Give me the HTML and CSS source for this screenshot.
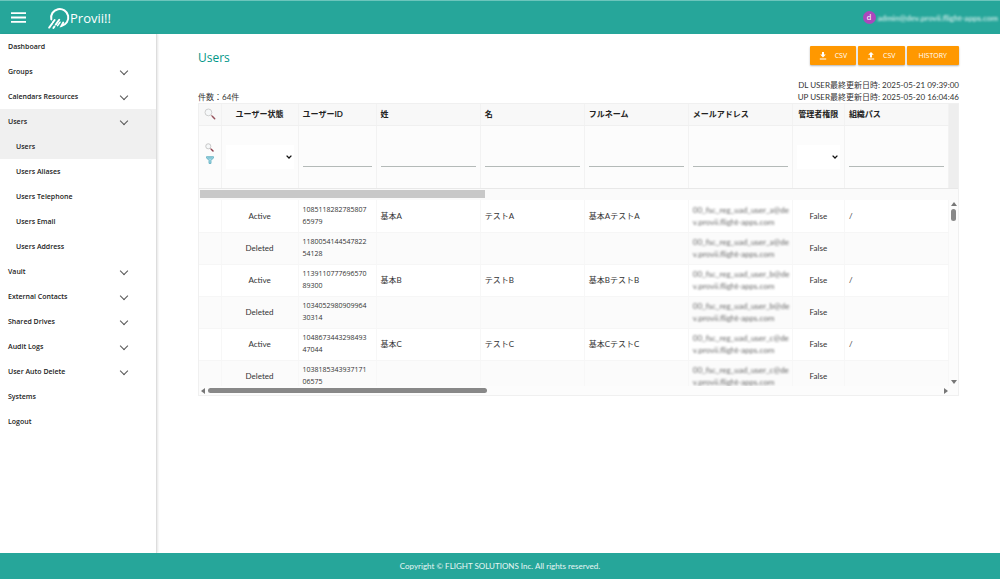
FILE: index.html
```
<!DOCTYPE html>
<html lang="ja">
<head>
    <meta charset="UTF-8">
    <meta name="viewport" content="width=device-width, initial-scale=1.0">
    <title>Provii!! - Users</title>
    <link rel="stylesheet" href="styles.css">
</head>
<body>
    <header class="topbar">
        <button type="button" class="menu-btn" aria-label="Menu">
            <svg width="15" height="11" viewBox="0 0 15 11"><path d="M0 1.2h15M0 5.5h15M0 9.8h15" stroke="#fff" stroke-width="1.8"/></svg>
        </button>
        <a href="#" class="logo">
            <svg width="22" height="22" viewBox="0 0 22 22" fill="none" stroke="#fff" stroke-linecap="round">
                <path d="M3.300 12.400A8.600 8.600 0 1 1 13.400 19L15.200 15.600" stroke-width="2"/>
                <path d="M1.200 20.600L3.600 17.200M5 15.200L6.600 13M5.400 21L6.400 19.600M7.800 17.600L11.200 12.800" stroke-width="1.900"/>
                <path d="M3.600 17.200L5 15.200M9.600 18.600L12 15.200" stroke-width="1.500"/>
            </svg>
            <span>Provii!!</span>
        </a>
        <div class="account">
            <span class="avatar">d</span>
            <span class="account-mail">admin@dev.provii.flight-apps.com</span>
        </div>
    </header>

    <div class="layout">
        <nav class="sidebar">
            <a href="#">Dashboard</a>
            <a href="#" class="has-sub">Groups</a>
            <a href="#" class="has-sub">Calendars Resources</a>
            <a href="#" class="has-sub active">Users</a>
            <div class="submenu">
                <a href="#" class="active">Users</a>
                <a href="#">Users Aliases</a>
                <a href="#">Users Telephone</a>
                <a href="#">Users Email</a>
                <a href="#">Users Address</a>
            </div>
            <a href="#" class="has-sub">Vault</a>
            <a href="#" class="has-sub">External Contacts</a>
            <a href="#" class="has-sub">Shared Drives</a>
            <a href="#" class="has-sub">Audit Logs</a>
            <a href="#" class="has-sub">User Auto Delete</a>
            <a href="#">Systems</a>
            <a href="#">Logout</a>
        </nav>

        <main>
            <div class="page-head">
                <h1>Users</h1>
                <div class="actions">
                    <button type="button" class="btn btn-icon">
                        <svg width="8" height="8" viewBox="0 0 8 8" fill="#fff"><path d="M3 0h2v2.6h1.8L4 5.4 1.2 2.6H3zM.8 6.4h6.4v1.2H.8z"/></svg>
                        CSV
                    </button>
                    <button type="button" class="btn btn-icon">
                        <svg width="8" height="8" viewBox="0 0 8 8" fill="#fff"><path d="M3 5.4h2V2.8h1.8L4 0 1.2 2.8H3zM.8 6.4h6.4v1.2H.8z"/></svg>
                        CSV
                    </button>
                    <button type="button" class="btn">HISTORY</button>
                </div>
            </div>
            <div class="page-info">
                <p class="count">件数：64件</p>
                <div class="updated">
                    <p>DL USER最終更新日時: 2025-05-21 09:39:00</p>
                    <p>UP USER最終更新日時: 2025-05-20 16:04:46</p>
                </div>
            </div>

            <div class="grid">
                <div class="grid-head">
                    <table>
                        <colgroup>
                            <col class="c-tool"><col class="c-status"><col class="c-id"><col class="c-name"><col class="c-name"><col class="c-name"><col class="c-name"><col class="c-admin"><col class="c-name">
                        </colgroup>
                        <thead>
                            <tr>
                                <th class="center"><svg class="lens" width="12" height="12" viewBox="0 0 12 12"><circle cx="4.4" cy="4.4" r="3.4" fill="#f6f8f9" stroke="#c4c4c4" stroke-width=".8"/><path d="M7 7l1.4 1.4" stroke="#c4a0a0" stroke-width="1"/><path d="M8.3 8.3l2.4 2.4" stroke="#94505a" stroke-width="1.5" stroke-linecap="round"/></svg></th>
                                <th class="center">ユーザー状態</th>
                                <th>ユーザーID</th>
                                <th>姓</th>
                                <th>名</th>
                                <th>フルネーム</th>
                                <th>メールアドレス</th>
                                <th class="center">管理者権限</th>
                                <th>組織パス</th>
                            </tr>
                            <tr class="filters">
                                <td class="tools">
                                    <button type="button" aria-label="検索"><svg width="9" height="9" viewBox="0 0 12 12"><circle cx="4.4" cy="4.4" r="3.4" fill="#f6f8f9" stroke="#b8b8b8"/><path d="M7 7l1.4 1.4" stroke="#c4a0a0" stroke-width="1.2"/><path d="M8.3 8.3l2.4 2.4" stroke="#8e3f4c" stroke-width="1.9" stroke-linecap="round"/></svg></button>
                                    <button type="button" aria-label="フィルター"><svg width="8" height="8" viewBox="0 0 8 8"><path d="M.5.7h7v1.2L5 4.4v3H3v-3L.5 1.9z" fill="#a5dbe8" stroke="#58a9bd" stroke-width=".8"/><path d="M1.5 2h5" stroke="#58a9bd" stroke-width=".6"/></svg></button>
                                </td>
                                <td><select aria-label="ユーザー状態"><option></option><option>Active</option><option>Deleted</option></select></td>
                                <td><input type="text" aria-label="ユーザーID"></td>
                                <td><input type="text" aria-label="姓"></td>
                                <td><input type="text" aria-label="名"></td>
                                <td><input type="text" aria-label="フルネーム"></td>
                                <td><input type="text" aria-label="メールアドレス"></td>
                                <td><select aria-label="管理者権限"><option></option><option>True</option><option>False</option></select></td>
                                <td><input type="text" aria-label="組織パス"></td>
                            </tr>
                        </thead>
                    </table>
                </div>
                <div class="top-scroll"><div class="top-thumb"></div></div>
                <div class="grid-body">
                    <div class="rows">
                        <table>
                            <colgroup>
                                <col class="c-tool"><col class="c-status"><col class="c-id"><col class="c-name"><col class="c-name"><col class="c-name"><col class="c-name"><col class="c-admin"><col class="c-name">
                            </colgroup>
                            <tbody>
                                <tr><td></td><td class="center">Active</td><td class="num">1085118282785807<br>65979</td><td>基本A</td><td>テストA</td><td>基本AテストA</td><td><span class="masked">00_fsc_reg_uad_user_a@de<br>v.provii.flight-apps.com</span></td><td class="center">False</td><td>/</td></tr>
                                <tr><td></td><td class="center">Deleted</td><td class="num">1180054144547822<br>54128</td><td></td><td></td><td></td><td><span class="masked">00_fsc_reg_uad_user_a@de<br>v.provii.flight-apps.com</span></td><td class="center">False</td><td></td></tr>
                                <tr><td></td><td class="center">Active</td><td class="num">1139110777696570<br>89300</td><td>基本B</td><td>テストB</td><td>基本BテストB</td><td><span class="masked">00_fsc_reg_uad_user_b@de<br>v.provii.flight-apps.com</span></td><td class="center">False</td><td>/</td></tr>
                                <tr><td></td><td class="center">Deleted</td><td class="num">1034052980909964<br>30314</td><td></td><td></td><td></td><td><span class="masked">00_fsc_reg_uad_user_b@de<br>v.provii.flight-apps.com</span></td><td class="center">False</td><td></td></tr>
                                <tr><td></td><td class="center">Active</td><td class="num">1048673443298493<br>47044</td><td>基本C</td><td>テストC</td><td>基本CテストC</td><td><span class="masked">00_fsc_reg_uad_user_c@de<br>v.provii.flight-apps.com</span></td><td class="center">False</td><td>/</td></tr>
                                <tr><td></td><td class="center">Deleted</td><td class="num">1038185343937171<br>06575</td><td></td><td></td><td></td><td><span class="masked">00_fsc_reg_uad_user_c@de<br>v.provii.flight-apps.com</span></td><td class="center">False</td><td></td></tr>
                            </tbody>
                        </table>
                    </div>
                    <div class="v-scroll">
                        <span class="arrow up"></span>
                        <span class="v-thumb"></span>
                        <span class="arrow down"></span>
                    </div>
                </div>
                <div class="h-scroll">
                    <span class="arrow left"></span>
                    <div class="h-track"><div class="h-thumb"></div></div>
                    <span class="arrow right"></span>
                </div>
            </div>
        </main>
    </div>

    <footer>Copyright © FLIGHT SOLUTIONS Inc. All rights reserved.</footer>
</body>
</html>
```
FILE: styles.css
```
/* General */
* {
    box-sizing: border-box;
}

body {
    margin: 0;
    min-height: 100vh;
    display: flex;
    flex-direction: column;
    font-family: Lato, "Noto Sans CJK JP", sans-serif;
    font-size: 8px;
    line-height: 12px;
    color: #333;
    background-color: #fff;
}

a {
    color: inherit;
    text-decoration: none;
}

button {
    font-family: inherit;
    border: none;
    padding: 0;
    background: none;
    cursor: pointer;
}

svg {
    display: block;
}

p {
    margin: 0;
}

/* Header */
.topbar {
    display: flex;
    align-items: center;
    height: 34px;
    padding: 0 2px 0 11px;
    background-color: #26a69a;
    border-top: 1px solid #6cc5bc;
    color: #fff;
}

.logo {
    display: flex;
    align-items: center;
    margin-left: 22px;
    font-family: "Open Sans", sans-serif;
    font-size: 13px;
}

.account {
    display: flex;
    align-items: center;
    gap: 2px;
    margin-left: auto;
}

.avatar {
    width: 13px;
    height: 13px;
    border-radius: 50%;
    background-color: #ab47bc;
    text-align: center;
}

.account-mail {
    font-weight: 700;
    filter: blur(1px);
    opacity: 0.75;
}

/* Sidebar */
.layout {
    display: flex;
    flex: 1;
}

.sidebar {
    width: 157px;
    border-right: 1px solid #ddd;
    font-family: "Open Sans", sans-serif;
    font-size: 7px;
    font-weight: 600;
    color: #222;
    box-shadow: 1px 0 2px rgba(0, 0, 0, 0.1);
}

.sidebar a {
    display: flex;
    align-items: center;
    justify-content: space-between;
    height: 25px;
    padding: 1px 29px 0 8px;
}

.sidebar .submenu a {
    padding-left: 16px;
}

.sidebar .active {
    background-color: #f0f0f0;
}

.has-sub::after {
    content: "";
    width: 5px;
    height: 5px;
    margin-bottom: 3px;
    border-right: 1px solid #555;
    border-bottom: 1px solid #555;
    transform: rotate(45deg);
}

/* Content */
main {
    flex: 1;
    min-width: 0;
    padding: 12px 41px 0;
}

.page-head {
    display: flex;
    justify-content: space-between;
    align-items: flex-start;
}

h1 {
    margin: 0;
    font-family: "Open Sans", sans-serif;
    font-size: 12px;
    font-weight: 400;
    line-height: 24px;
    color: #009688;
}

.actions {
    display: flex;
    gap: 2px;
}

.btn {
    display: flex;
    align-items: center;
    justify-content: center;
    height: 19px;
    padding: 0 12px;
    font-family: "Open Sans", sans-serif;
    font-size: 7px;
    color: #fff;
    background-color: #ff9800;
    border-radius: 1px;
    box-shadow: 0 1px 2px rgba(0, 0, 0, 0.3);
}

.btn-icon {
    gap: 8px;
    padding: 0 9px;
}

.page-info {
    display: flex;
    justify-content: space-between;
    align-items: flex-end;
    margin-top: 9px;
}

.updated {
    text-align: right;
}

/* Grid */
.grid {
    border: 1px solid #f0f0f0;
}

.grid-head {
    padding-right: 9px;
    background-color: #eee;
    border-bottom: 1px solid #e8e8e8;
}

table {
    width: 100%;
    table-layout: fixed;
    border-collapse: collapse;
}

.c-tool { width: 22px; }
.c-status { width: 77px; }
.c-id { width: 78px; }
.c-name { width: 104px; }
.c-admin { width: 52px; }

th, td {
    padding: 0 4px;
    text-align: left;
    border-right: 1px solid #f2f2f2;
}

th {
    height: 21px;
    color: #222;
    background-color: #f8f8f8;
    border-bottom: 1px solid #f0f0f0;
    white-space: nowrap;
}

.center {
    text-align: center;
}

.lens {
    margin: 0 auto;
}

.filters td {
    height: 63px;
    background-color: #fcfcfc;
}

.filters .tools {
    padding-bottom: 6px;
}

.tools button {
    display: block;
    margin: 4px auto;
}

.filters input {
    display: block;
    width: 100%;
    height: 20px;
    padding: 0;
    border: none;
    border-bottom: 1px solid #b4bab8;
    background: none;
    font-size: 8px;
    outline: none;
}

.filters select {
    display: block;
    width: 100%;
    height: 24px;
    padding: 0 12px 0 4px;
    border: none;
    appearance: none;
    background: #fff url("data:image/svg+xml,%3Csvg xmlns='http://www.w3.org/2000/svg' width='6' height='4' viewBox='0 0 6 4'%3E%3Cpath d='M.6.6L3 3 5.400.6' fill='none' stroke='%23111' stroke-width='1.300'/%3E%3C/svg%3E") no-repeat right 2px center;
    font-size: 8px;
}

.top-scroll {
    padding: 1px 0 2px 1px;
    background-color: #fafafa;
}

.top-thumb {
    width: 285px;
    height: 8px;
    background-color: #c8c8c8;
}

.grid-body {
    display: flex;
    height: 186px;
}

.rows {
    flex: 1;
    overflow: hidden;
}

.rows td {
    height: 32px;
    border-right-color: #f7f7f7;
    border-bottom: 1px solid #f6f6f6;
}

.rows tr:nth-child(even) {
    background-color: #fbfbfb;
}

.rows .num {
    font-family: "Open Sans", sans-serif;
    font-size: 7px;
}

.masked {
    display: block;
    filter: blur(1px);
    color: #666;
}

/* Scrollbars */
.v-scroll {
    display: flex;
    flex-direction: column;
    align-items: center;
    width: 9px;
    padding: 2px 0;
    background-color: #fcfcfc;
}

.v-thumb {
    width: 5px;
    height: 12px;
    margin-top: 3px;
    border-radius: 3px;
    background-color: #888;
}

.h-scroll {
    display: flex;
    align-items: center;
    gap: 3px;
    height: 9px;
    padding: 0 10px 0 2px;
    background-color: #fcfcfc;
}

.h-track {
    flex: 1;
}

.h-thumb {
    width: 38%;
    height: 5px;
    border-radius: 3px;
    background-color: #888;
}

.arrow {
    border: 3px solid transparent;
}

.up {
    border-bottom: 4px solid #777;
    border-top: none;
}

.down {
    margin-top: auto;
    border-top: 4px solid #777;
    border-bottom: none;
}

.left {
    border-right: 4px solid #777;
    border-left: none;
}

.right {
    border-left: 4px solid #777;
    border-right: none;
}

/* Footer */
footer {
    height: 26px;
    line-height: 26px;
    text-align: center;
    color: #e8f6f5;
    background-color: #26a69a;
}
```
